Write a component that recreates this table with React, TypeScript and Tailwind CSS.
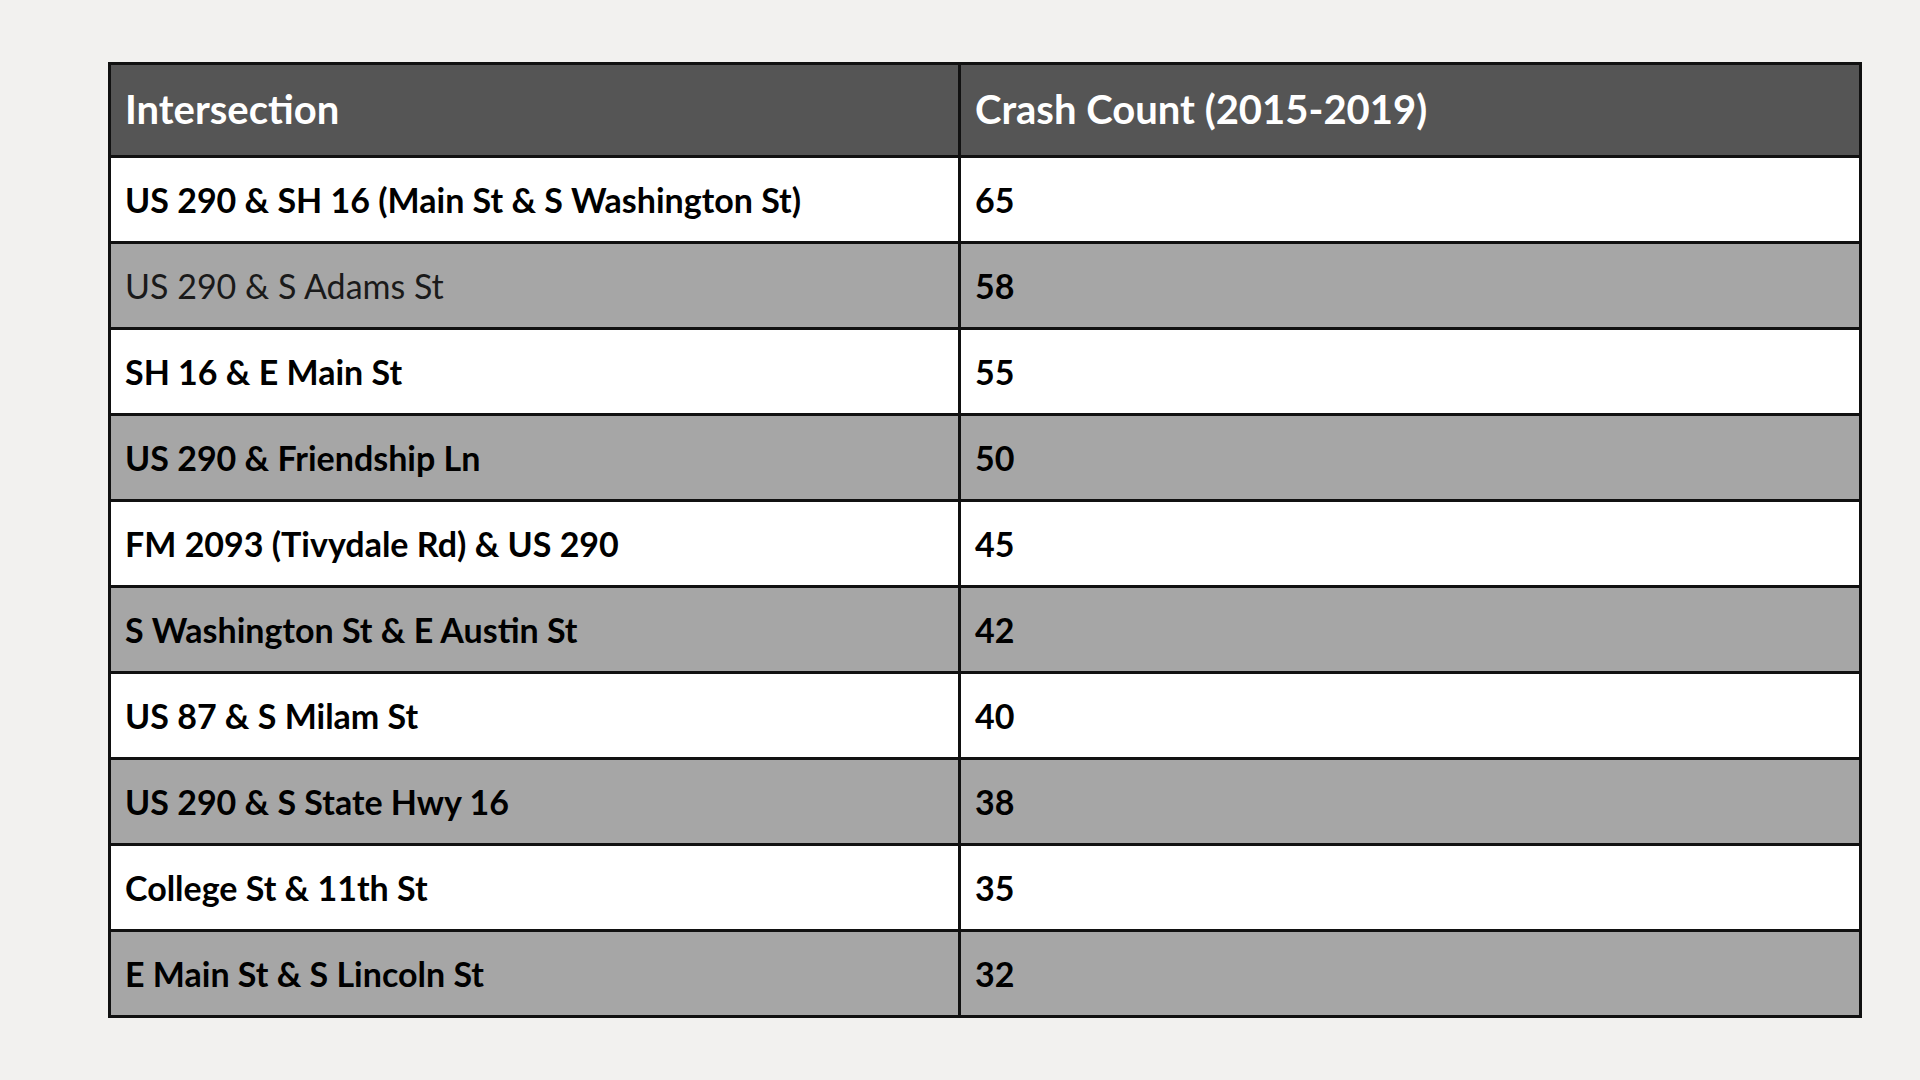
const rows = [
  { name: "US 290 & SH 16 (Main St & S Washington St)", count: 65 },
  { name: "US 290 & S Adams St", count: 58, light: true },
  { name: "SH 16 & E Main St", count: 55 },
  { name: "US 290 & Friendship Ln", count: 50 },
  { name: "FM 2093 (Tivydale Rd) & US 290", count: 45 },
  { name: "S Washington St & E Austin St", count: 42 },
  { name: "US 87 & S Milam St", count: 40 },
  { name: "US 290 & S State Hwy 16", count: 38 },
  { name: "College St & 11th St", count: 35 },
  { name: "E Main St & S Lincoln St", count: 32 },
];

function App() {
  return (
    <div
      className="w-[1920px] h-[1080px] bg-[#f2f1ef] pt-[62px] pl-[108px]"
      style={{ fontFamily: "Lato, 'Open Sans', sans-serif" }}
    >
      <div className="w-[1754px] border-[3px] border-[#111]">
        {/* header */}
        <div className="flex h-[90px] bg-[#555555] text-white text-[40px] font-bold">
          <div className="w-[850px] border-r-[3px] border-[#111] flex items-center px-[14px] pb-[2px]">
            Intersection
          </div>
          <div className="flex-1 flex items-center px-[14px] pb-[2px]">
            Crash Count (2015-2019)
          </div>
        </div>

        {rows.map((row, i) => (
          <div
            key={row.name}
            className={
              "flex h-[86px] border-t-[3px] border-[#111] text-[34px] text-black " +
              (i % 2 === 0 ? "bg-white" : "bg-[#a6a6a6]")
            }
          >
            <div
              className={
                "w-[850px] border-r-[3px] border-[#111] flex items-center px-[14px] " +
                (row.light ? "font-normal text-[#1a1a1a]" : "font-bold")
              }
            >
              {row.name}
            </div>
            <div className="flex-1 flex items-center px-[14px] font-bold">
              {row.count}
            </div>
          </div>
        ))}
      </div>
    </div>
  );
}

export default App;
